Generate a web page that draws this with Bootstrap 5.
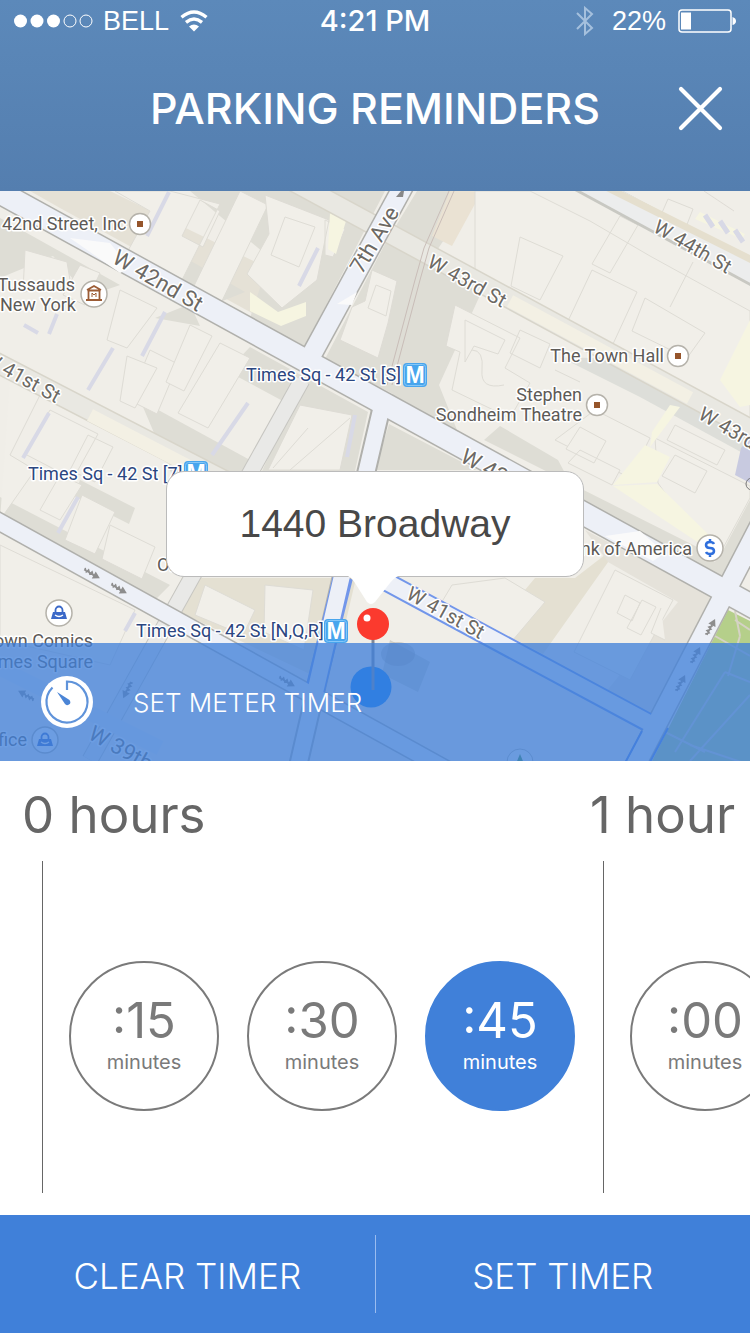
<!DOCTYPE html>
<html lang="en">
<head>
<meta charset="utf-8">
<meta name="viewport" content="width=device-width, initial-scale=1">
<title>Parking Reminders</title>
<link href="https://cdn.jsdelivr.net/npm/bootstrap@5.3.0/dist/css/bootstrap.min.css" rel="stylesheet">
<style>
  :root { --brand: #4080d9; --ink: #666; --ring: #7a7a7a; }
  body { font-family: Inter, "Liberation Sans", sans-serif; background: #fff; }
  .top-bar { background: linear-gradient(#5c89ba, #547eaf); padding-bottom: 53px; }
  .status-row { font: 27px/42px "Liberation Sans", sans-serif; padding: 0 14px; }
  .status-left { gap: 10px; }
  .status-right { gap: 12px; }
  .status-time { font: 500 29px/42px Inter, sans-serif; }
  .title-row { display: grid; grid-template-columns: 1fr auto 1fr; padding: 36px 27px 0; }
  .title-row h1 { font-size: 43px; line-height: 60px; font-weight: 500; grid-column: 2; }
  .close-btn { color: #fff; line-height: 0; justify-self: end; align-self: center; }
  .map-area { min-height: 570px; background: #f0eee8; }
  .map-art { inset: 0; width: 100%; height: 100%; }
  .callout-box { top: calc(50% - 5px); width: 418px; max-width: 90%; border-radius: 18px; border: 1px solid #bbb;
    font: 39px/104px "Liberation Sans", sans-serif; color: #484848; }
  .callout-tip { top: 100%; left: 50%; margin: -1px 0 0 -27px; }
  .meter-bar { background: rgba(64,128,217,.77); height: 118px; padding: 0 41px; gap: 40px; font-size: 26px; font-weight: 300; }
  .hours-strip { padding: 24px 0 22px 22px; overflow-x: hidden; }
  .hour-group { flex: 0 0 568px; }
  .hour-group h2 { font-size: 51px; line-height: 60px; color: var(--ink); font-weight: 400; margin-bottom: 16px; white-space: nowrap; }
  .hour-track { border-left: 1px solid var(--ink); margin-left: 20px; padding: 100px 0 82px 26px; gap: 28px; }
  .hour-track.next-hour { margin-left: 13px; }
  .minute-pick { flex: 0 0 150px; height: 150px; border: 2px solid var(--ring); color: var(--ring); cursor: pointer;
    font-size: 20px; line-height: 24px; padding-bottom: 6px; }
  .minute-pick span { font-size: 49px; line-height: 58px; }
  .btn-check:checked + .minute-pick { background: var(--brand); border-color: var(--brand); color: #fff; }
  .action-bar { background: var(--brand); padding: 20px 0; }
  .action-bar button { flex: 1 1 0; background: none; border: 0; color: #fff; font-size: 35px; font-weight: 300; line-height: 74px; padding: 4px 0 0; white-space: nowrap; }
  .action-bar button + button { border-left: 1px solid #9abcf0; }
  .poi { font: 18px Roboto, sans-serif; fill: #5d5a57; stroke: #fff; stroke-width: 3px; paint-order: stroke; stroke-linejoin: round; }
  .metro { fill: #2b4680; }
  .street { font-size: 20px; fill: #6c6964; }
  .street-lg { font-size: 22px; }
  .metro-sign { font: 700 23px "Liberation Sans", sans-serif; fill: #fff; text-anchor: middle; }
</style>
</head>
<body>
<div class="d-flex flex-column min-vh-100">

  <header class="top-bar text-white">
    <div class="status-row d-flex align-items-center">
      <div class="status-left col d-flex align-items-center">
        <svg width="79" height="14" viewBox="0 0 79 14" fill="#fff" aria-label="Signal"><circle cx="6.500" cy="7" r="6.500"/><circle cx="23" cy="7" r="6.500"/><circle cx="39.500" cy="7" r="6.500"/><g fill="none" stroke="#fff" stroke-width="1"><circle cx="56" cy="7" r="6"/><circle cx="72" cy="7" r="6"/></g></svg>
        <span>BELL</span>
        <svg width="30" height="22" viewBox="0 0 30 22" fill="none" stroke="#fff" stroke-width="3.400" aria-label="Wi-Fi"><path d="M2.500 7.200Q15-3.200 27.500 7.200M7 12.300q8-6.400 16 0"/><path d="M15 21.500l-5-5q5-4 10 0z" fill="#fff" stroke="none"/></svg>
      </div>
      <div class="status-time">4:21 PM</div>
      <div class="status-right col d-flex align-items-center justify-content-end">
        <svg width="24" height="30" viewBox="0 0 24 30" fill="none" stroke="#a5c0dd" stroke-width="2" aria-label="Bluetooth"><path d="M1 7l15 15-7 6V2l7 6L1 23"/></svg>
        <span>22%</span>
        <svg width="58" height="24" viewBox="0 0 58 24" aria-label="Battery"><rect x="1" y="1" width="52" height="22" rx="3" fill="none" stroke="#fff" stroke-width="1.500"/><rect x="3" y="3.500" width="10" height="17" fill="#fff"/><path d="M54.500 8q3.500 1 3.500 4t-3.500 4z" fill="#fff"/></svg>
      </div>
    </div>
    <div class="title-row">
      <h1 class="m-0 text-nowrap">PARKING REMINDERS</h1>
      <button class="close-btn btn p-0 border-0" type="button" aria-label="Close"><svg width="45" height="45" viewBox="0 0 45 45" stroke="#fff" stroke-width="4.200" stroke-linecap="round"><path d="M3 3l39 39M42 3L3 42"/></svg></button>
    </div>
  </header>

  <main class="d-flex flex-column flex-grow-1">
    <section class="map-area position-relative overflow-hidden flex-grow-1 d-flex flex-column justify-content-end">
      <svg class="map-art position-absolute" viewBox="0 191 750 570" preserveAspectRatio="xMidYMid slice" aria-label="Map around 1440 Broadway">
        <defs>
          <g id="metroSign"><rect width="24" height="24" rx="4" fill="#48a5ed"/><rect x="1.500" y="1.500" width="21" height="21" rx="3" fill="none" stroke="#86c7f8"/></g>
          <g id="squareSpot"><circle r="10.500" fill="#fff" stroke="#b5b2aa" stroke-width="1.500"/><rect x="-3" y="-3" width="6" height="6" fill="#96552b"/></g>
          <g id="bagSpot"><circle r="13" fill="#fff" stroke="#b5b2aa" stroke-width="1.500"/><path d="M-6-1H6L8 6H-8z" fill="#3a68c8"/><path d="M-3.500-1v-2a3.500 3.500 0 0 1 7 0v2" fill="none" stroke="#3a68c8" stroke-width="1.800"/><path d="M-4 2q4 3 8 0" fill="none" stroke="#fff" stroke-width="1.400"/></g>
          <g id="arrow" stroke="#8d8d8d" fill="none"><path d="M-9-2l3 3 1-3 3 3 1-3 3 3M-9 0H4" stroke-width="1.500"/><path d="M2-4l7 4-7 4z" fill="#8d8d8d" stroke="none"/></g>
        </defs>
        <rect y="191" width="750" height="570" fill="#f0eee8"/>
        <!-- pavements and shaded ground -->
        <g fill="#deddd5">
          <path d="M0 218l120 67-32 11-35-40-53 22z"/><path d="M30 191h80l215 105-20 46L60 208z" fill="#e5e1d6"/>
          <path d="M140 232l105 60-25 10-90-45zM155 318l35-14 10 22z"/>
          <path d="M190 191h195l-80 155-55-28 20-60z"/>
          <path d="M417 191h60l-50 74-32 130-70-36 60-115z"/><path d="M450 191h32l-30 55-20-10z" fill="#eae2d3"/>
          <path d="M427 245l60 35-48 105 18 45-65-34z"/>
          <path d="M389 424l88 46H375zM250 347l118 65-13 59H262l30-65-65-35z"/>
          <path d="M140 400l110 60-20 50-55-28zM80 480l55 28-6 16-55-28zM0 497l170 88-14 14L0 518z"/>
          <path d="M484 440l235 118 31-58v28l-28 52-140-75-24-45-58-34z"/>
          <path d="M575 578h-40l-42 50 50 26 80-113zM356 578l-14 60-30 37-145-69 15-28z" fill="#e4e0d2"/>
          <path d="M585 530l126 66-60 118-45-22 72-90-70-40z" fill="#e5e2da"/>
          <path d="M650 360l70 37 30 20v40l-110-60-80-40z" fill="#ddded9"/>
          <path d="M390 640l40 22-12 30-36-18z" fill="#d4d2ca"/>
        </g>
        <!-- building footprints -->
        <g fill="#f1efe9" stroke="#dedcd5" stroke-width="1">
          <path d="M115 191l35 20-25 45 55 28 40-80-50-13zM200 200l20 11-17 36-21-11zM240 191l28 14-48 100-28-15z"/>
          <path d="M25 250l42 12 4 24-48 6zM80 265l20 8-15 32-22-10zM120 290l37 18-30 40-20-8zM150 350l28 14-21 50-28-14z"/>
          <path d="M127 356l30 12-22 40-15-7zM190 325l22 11-28 55-18-9zM220 343l30 15-42 70-30-15z"/>
          <path d="M265 195l64 25-12 60-35 28-35-34 22-40zM285 217l30 10-16 40-28-12zM325 220l20 9-12 28-8-2z"/>
          <path d="M372 270l25 11-9 42-10 35-38-18 12-33 13-6zM376 285l15 6-5 25-18-8z"/>
          <path d="M475 191h55l60 30 60 35 100 55v110l-100-50-145-73-30-20zM520 237l43 19-23 44-29-14zM592 270l45 22-24 52-45-23zM620 216l18 9-28 48-18-9zM645 298l60 35-18 25-55-27zM693 262l-23 45"/>
          <path d="M455 305l65 33-15 30 25 15-20 35-58-28 8-38-14-6zM465 320l40 20-7 14-24-8-9 16zM520 330l30 14-10 24-30-15zM595 410l55 28-20 40-75-38zM655 438l95 48v12l-35 65-57-80z"/>
          <path d="M300 405l52 10-12 55h-72zM350 418l-60 52M308 428l-35 40M10 380l30 15-30 60 25 15-35 50M50 410l48 24-25 45-48-25zM88 435l25 12-18 35-25-12zM60 475l22 10-22 35-20-10zM82 495l33 17-20 42-30-14zM110 525l45 22-13 32-40-20z"/>
          <path d="M0 545l135 65-25 55-110-25zM205 585l50 25-12 25-48-20zM265 585l48 5-9 60-40-18zM505 578l40 24-38 45-70-37 15-25zM615 570l58 30-43 80-56-28zM580 427l26 14-12 22-28-14zM580 450l40 20-8 15-44-22zM675 425l50 25-8 15-50-25zM675 455l32 16-12 22-33-17z"/>
          <path d="M625 595l15 8-8 18-15-8zM642 600l14 7-15 28-14-7zM661 608l-10 25 14 7M668 199l25 10-7 18-25-12zM704 191l30 20M472 350q12 0 10 20t22 15M555 370l25 12"/>
        </g>
        <!-- lit courtyards and blue-grey edges -->
        <path d="M645 445l25 12-13 25-44 3zM613 486l44-2 58 57-7 8zM670 405l10 2-30 40 2-15zM330 213l16 8-10 33-8-5zM250 292l28 20 28-10v14l-25 10-31-15zM700 212l45 22-3 5-47-20zM640 378l110 60M560 318l60 30-1 3-61-31zM720 380l30-60v85l-10 2z" fill="#f6f5e1"/>
        <g stroke="#d8d9e6" stroke-width="4" fill="none"><path d="M169 192l-22 44M165 312l-23 44M113 348l-25 42M49 413l-26 45M78 497l-20 36M248 403l-36 52M318 248l-19 38M355 415l-8 42M135 613l-10 18M24 325l14 8M57 314l-8 20"/><path d="M705 215l8 12M720 221l8 12M735 230l8 12" stroke-width="5"/></g>
        <path d="M741 448l9-10v45l-15-8z" fill="#c8cae0"/>
        <!-- minor roads -->
        <g fill="none">
          <path d="M283 176L780 445M-20 354l360 186" stroke="#d8d5ca" stroke-width="21"/>
          <path d="M283 176L780 445M-20 354l360 186" stroke="#e9e8e2" stroke-width="18"/>
          <path d="M510 301l180 97" stroke="#f3f0e4" stroke-width="13"/><path d="M90 415l100 52" stroke="#f3f0e4" stroke-width="13"/>
          <path d="M575 178l190 103" stroke="#c8c8c2" stroke-width="23"/><path d="M576 177l190 103" stroke="#eceded" stroke-width="20"/>
          <path d="M592 180l160 80" stroke="#e5dfce" stroke-width="7"/>
          <path d="M302 380L90 760" stroke="#c6c5c0" stroke-width="17"/><path d="M302 380L90 760" stroke="#e9e9e7" stroke-width="15"/>
          <path d="M0 668l160 80" stroke="#e5e7ec" stroke-width="15"/>
        </g>
        <g fill="none" stroke="#c9bdb8" stroke-width="1"><path d="M449 191l-25 57-9 32-28 105M454 191l-25 57-9 32-28 105"/></g>
        <!-- park -->
        <path d="M728 610l22 11v140H652z" fill="#b5cf8a"/>
        <path d="M715 636l35 20M735 611l5 25M740 636l-12 40M725 672l25 10M725 672l-50 80M750 695l-60 66M665 732l40 20M690 745l60 20M735 620l15 10" stroke="#d5d2c5" stroke-width="2" fill="none"/>
        <!-- main roads: edge, then surface -->
        <g fill="none" stroke="#b0b0ac" stroke-width="25">
          <path d="M-20 181.500L770 616"/><path d="M410 174l-98 180" stroke-width="22"/><path d="M768 510L632 772" stroke-width="22"/><path d="M-20 511L480 788" stroke-width="19"/>
          <path d="M381 410l-40 170-45 195" stroke-width="20"/>
          <path d="M343 577l-28 113M385 581l262 141" stroke="#7296ea" stroke-width="20"/>
        </g>
        <g fill="none" stroke="#edf0f7" stroke-width="22">
          <path d="M-20 181.500L770 616"/><path d="M410 174l-98 180" stroke-width="19"/><path d="M768 510L632 772" stroke-width="19"/><path d="M-20 511L480 788" stroke-width="16"/>
          <path d="M381 410l-40 170-45 195M385 581l268 144" stroke-width="16"/>
        </g>
        <path d="M642 731l-17 32M668 728l-18 34" stroke="#5583e8" stroke-width="2"/>
        <path d="M70 238l40 5 20 25-10 5zM337 304l20-12-5 13zM605 536l35-5 25 22-12 8z" fill="#fafafa"/>
        <g><use href="#arrow" transform="translate(92 574) rotate(29)"/><use href="#arrow" transform="translate(119 589) rotate(29)"/><use href="#arrow" transform="translate(711 627) rotate(-63)"/><use href="#arrow" transform="translate(696 655) rotate(-63)"/><use href="#arrow" transform="translate(681 683) rotate(-63)"/><use href="#arrow" transform="translate(287 682) rotate(29)"/><use href="#arrow" transform="translate(127 690) rotate(115)"/><use href="#arrow" transform="translate(26 695) rotate(208)"/><path d="M396 197l5-6h3l-1 6z" fill="#888"/></g>
        <!-- street names -->
        <g class="poi">
          <text class="street street-lg" transform="translate(111 262) rotate(30)">W 42nd St</text>
          <text class="street street-lg" transform="translate(362 275) rotate(-59)">7th Ave</text>
          <text class="street" transform="translate(426 266) rotate(29)">W 43rd St</text>
          <text class="street" transform="translate(652 231) rotate(30)">W 44th St</text>
          <text class="street" transform="translate(697 418) rotate(30)">W 43rd St</text>
          <text class="street" transform="translate(-19 362) rotate(29)">W 41st St</text>
          <text class="street street-lg" transform="translate(459 461) rotate(29)">W 42nd St</text>
          <text class="street" transform="translate(405 598) rotate(29)">W 41st St</text>
          <text class="street street-lg" transform="translate(87 738) rotate(29)">W 39th St</text>
        </g>
        <!-- places -->
        <g class="poi">
          <text x="2" y="230">42nd Street, Inc</text>
          <text x="75" y="291" text-anchor="end">Tussauds</text><text x="76" y="311" text-anchor="end">New York</text>
          <text x="664" y="362" text-anchor="end">The Town Hall</text>
          <text x="582" y="401" text-anchor="end">Stephen</text><text x="582" y="421" text-anchor="end">Sondheim Theatre</text>
          <text x="692" y="555" text-anchor="end">Bank of America</text>
          <text x="157" y="571">Old</text>
          <text x="93" y="647" text-anchor="end">Midtown Comics</text><text x="93" y="668" text-anchor="end">Times Square</text>
          <text x="27" y="746" text-anchor="end">Post Office</text>
          <g class="metro"><text x="246" y="381">Times Sq - 42 St [S]</text><text x="28" y="480">Times Sq - 42 St [7]</text><text x="136" y="637">Times Sq - 42 St [N,Q,R]</text></g>
        </g>
        <use href="#metroSign" x="403" y="363"/><use href="#metroSign" x="184" y="461"/><use href="#metroSign" x="324" y="619"/>
        <g class="metro-sign"><text x="415" y="383">M</text><text x="196" y="481">M</text><text x="336" y="639">M</text></g>
        <use href="#squareSpot" x="140" y="224"/><use href="#squareSpot" x="678" y="356"/><use href="#squareSpot" x="597" y="405"/>
        <use href="#bagSpot" x="59" y="613"/><use href="#bagSpot" x="45" y="740"/>
        <g transform="translate(94 294)"><circle r="13" fill="#fff" stroke="#b5b2aa" stroke-width="1.500"/><path d="M-7-4l7-4 7 4M-5.500-3V5M5.500-3V5M-8 6H8M-6.500-3.500h13" fill="none" stroke="#9c5c35" stroke-width="1.800"/><path d="M-2 3v-4l2 2 2-2v4" fill="none" stroke="#9c5c35"/></g>
        <g transform="translate(710 548)"><circle r="13" fill="#fff" stroke="#b5b2aa" stroke-width="1.500"/><path d="M4-4Q3-6 0-6-4-6-4-3T0 0t4 3-4 3q-3 0-4-2M0-9v3M0 6v3" fill="none" stroke="#2f6fdd" stroke-width="2.500"/></g>
        <g transform="translate(520 762)"><circle r="13" fill="#f6f6ef" stroke="#b5b2aa"/><path d="M-5 4l5-12 5 12z" fill="#3e8d3e"/></g>
        <circle cx="752" cy="484" r="6" fill="none" stroke="#777"/>
        <!-- current position and pin -->
        <ellipse cx="398" cy="654" rx="17" ry="12" fill="#8f8d88" opacity=".35"/>
        <circle cx="371" cy="687" r="20.500" fill="#007cf8"/>
        <path d="M373 638v52" stroke="#7d8698" stroke-width="3"/>
        <circle cx="373" cy="624" r="16" fill="#fb3a2e"/><circle cx="367" cy="618" r="3.500" fill="#fff"/>
      </svg>
      <div class="callout-box position-absolute start-50 translate-middle-x bg-white text-center">1440 Broadway
        <svg class="callout-tip position-absolute" width="50" height="30" viewBox="0 0 50 30"><path d="M0 0h50v1q-4 2-8 7L27 27q-4 4-8 0L7 8Q4 3 0 1z" fill="#fff"/></svg>
      </div>
      <div class="meter-bar position-relative d-flex align-items-center text-white">
        <svg width="52" height="52" viewBox="0 0 52 52" aria-hidden="true"><circle cx="26" cy="26" r="26" fill="#fff"/><path d="M26 14V5.500A20.500 20.500 0 1 1 11.500 11.500" fill="none" stroke="#5f93da" stroke-width="2.200"/><path d="M16 16l12.500 8q2 3-.5 4.500t-4-.5z" fill="#4b85d6"/></svg>
        <span>SET METER TIMER</span>
      </div>
    </section>

    <form class="hours-strip d-flex" id="timerForm">
      <section class="hour-group">
        <h2>0 hours</h2>
        <div class="hour-track d-flex">
          <input class="btn-check" type="radio" name="duration" id="m15"><label class="minute-pick rounded-circle d-flex flex-column align-items-center justify-content-center" for="m15"><span>:15</span>minutes</label>
          <input class="btn-check" type="radio" name="duration" id="m30"><label class="minute-pick rounded-circle d-flex flex-column align-items-center justify-content-center" for="m30"><span>:30</span>minutes</label>
          <input class="btn-check" type="radio" name="duration" id="m45" checked><label class="minute-pick rounded-circle d-flex flex-column align-items-center justify-content-center" for="m45"><span>:45</span>minutes</label>
        </div>
      </section>
      <section class="hour-group">
        <h2>1 hour</h2>
        <div class="hour-track next-hour d-flex">
          <input class="btn-check" type="radio" name="duration" id="m60"><label class="minute-pick rounded-circle d-flex flex-column align-items-center justify-content-center" for="m60"><span>:00</span>minutes</label>
        </div>
      </section>
    </form>
  </main>

  <footer class="action-bar d-flex">
    <button type="reset" form="timerForm">CLEAR TIMER</button>
    <button type="submit" form="timerForm">SET TIMER</button>
  </footer>
</div>
<script src="https://cdn.jsdelivr.net/npm/bootstrap@5.3.0/dist/js/bootstrap.bundle.min.js"></script>
</body>
</html>
